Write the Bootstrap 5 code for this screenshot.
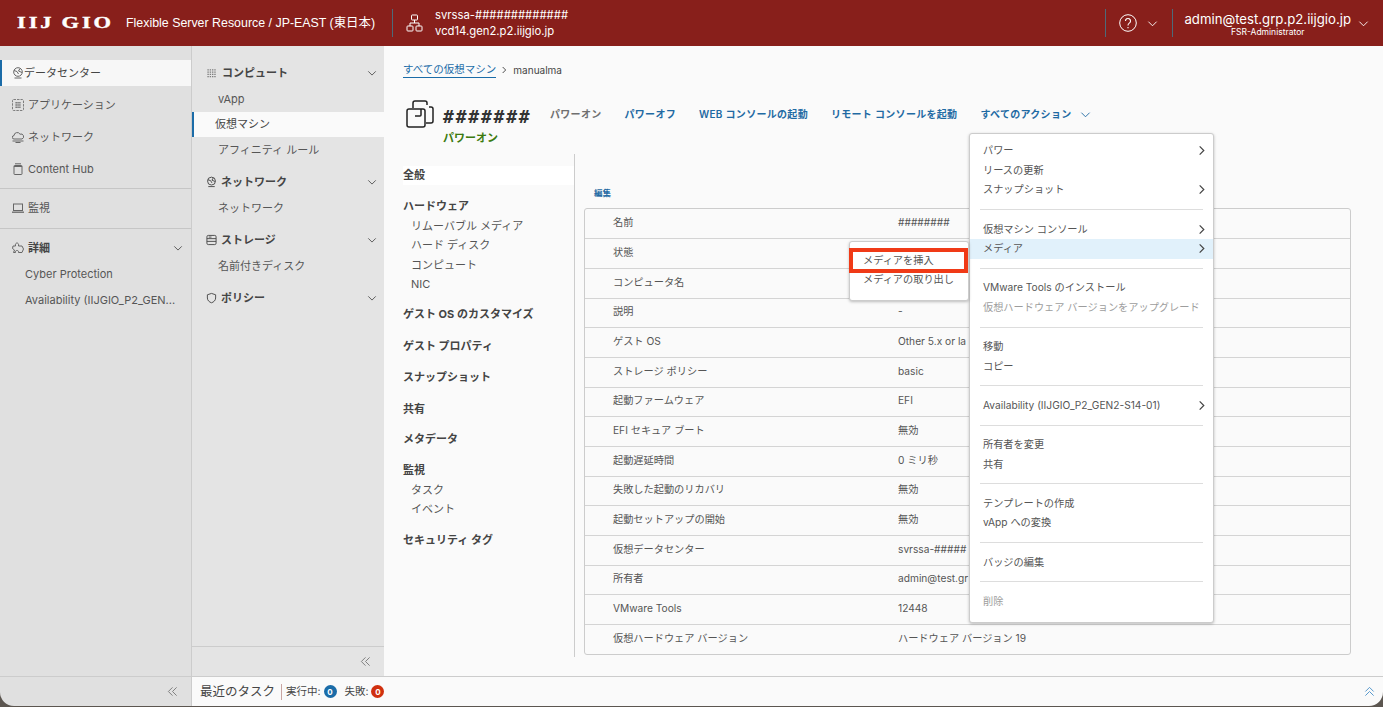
<!DOCTYPE html>
<html lang="ja">
<head>
  <meta charset="UTF-8" />
  <meta name="viewport" content="width=device-width, initial-scale=1.0"/>
  <title>仮想マシン - Flexible Server Resource</title>
  <link href="https://cdn.jsdelivr.net/npm/bootstrap@5.3.3/dist/css/bootstrap.min.css" rel="stylesheet">
  <style>
    html, body { height: 100%; }
    body {
      background: #5c5650;
      color: #454545;
      font-family: Inter, "Noto Sans CJK JP", sans-serif;
      font-size: 11px;
      overflow: hidden;
    }
    svg { flex-shrink: 0; fill: none; stroke: currentColor; stroke-width: 1; }
    a { text-decoration: none; }

    /* header */
    .top-bar { height: 46px; background: #881f1b; color: #fff; }
    .logo-text { width: 126px; padding-left: 17px; white-space: nowrap; }
    .logo-text span {
      display: inline-block; transform: scaleX(1.32); transform-origin: left center;
      font: 700 17px/1 "Liberation Serif", serif;
      letter-spacing: 2.2px; word-spacing: -1px;
      -webkit-text-stroke: .4px #fff;
    }
    .top-title { width: 262px; font: 400 12.4px/1 "Liberation Sans", "Noto Sans CJK JP", sans-serif; white-space: nowrap; }
    .top-sep { width: 1px; height: 28px; background: #4d6a78; }
    .top-vcd { font-size: 11.3px; line-height: 16px; margin-left: 12px; }
    .top-net { margin-left: 13px; }
    .top-help { margin-left: 13px; }
    .top-arrow { margin: 0 14px 0 10px; }
    .top-user { font-size: 13.2px; line-height: 15px; margin-top: 2px; }
    .top-role { font-size: 8.5px; line-height: 10px; }
    .user-block { margin-left: 11px; }
    .user-arrow { margin: 0 14px 0 7px; }

    /* sidebars */
    .app-body { height: 660px; }
    .side-one {
      width: 192px; background: #e0e0e0; border-right: 1px solid #ccc;
      border-bottom-left-radius: 14px; padding-top: 14px;
    }
    .side-two { width: 192px; height: 100%; background: #e4e4e4; padding-top: 14px; }
    .side-row { height: 26px; padding-left: 12px; font-size: 11px; color: #565656; white-space: nowrap; }
    .side-one .side-row { margin-bottom: 6px; }
    .side-one .side-row.flush { margin-bottom: 0; }
    .side-row.on { background: #f7f7f7; border-left: 2px solid #1b6ca8; padding-left: 10px; color: #454545; }
    .side-row.head { font-weight: 700; color: #454545; justify-content: space-between; padding-right: 8px; }
    .side-row.sub { padding-left: 25px; }
    .side-icon { color: #666; margin-right: 4px; }
    .side-icon.near { margin-right: 0; }
    .side-rule { border-top: 1px solid #c6c6c6; margin-bottom: 6px; }
    .side-rule.spaced { margin-top: 1px; }
    .collapse-row { height: 30px; border-top: 1px solid #ccc; color: #777; padding-right: 13px; }
    .two-sub { height: 25.5px; padding-left: 26px; color: #565656; }
    .two-sub.on { background: #fafafa; border-left: 2px solid #1b6ca8; padding-left: 21px; color: #454545; }
    .two-head { height: 26px; padding: 0 7px 0 14px; font-weight: 700; color: #454545; margin-top: 6.500px; }
    .two-head:first-child { margin-top: 0; }

    /* main */
    .main-pane { background: #fafafa; padding: 16px 32px 0 19px; position: relative; }
    .crumb { height: 16px; font-size: 10.5px; }
    .crumb a { color: #1b6ca8; border-bottom: 1px solid #1b6ca8; line-height: 14px; }
    .crumb svg { color: #333; }
    .crumb-name { font-size: 10px; margin-left: 1px; }
    .vm-head { height: 54px; margin-top: 22px; }
    .vm-icon { margin: 0 9px 0 3px; color: #222; }
    .vm-name { font: 700 18px/26px "DejaVu Sans Mono", monospace; color: #333; letter-spacing: 1.800px; width: 107px; margin-top: 4px; white-space: nowrap; }
    .vm-state { color: #3c7a0f; font-weight: 700; font-size: 11px; line-height: 14px; margin-top: 1px; }
    .vm-actions { font-size: 10px; font-weight: 600; color: #1f6aa3; gap: 23px; margin-top: 7px; letter-spacing: .3px; white-space: nowrap; }
    .vm-actions .off { color: #6f6f6f; }
    .detail-wrap { height: 503px; }
    .detail-nav { width: 172px; border-right: 1px solid #ccc; padding-top: 12px; }
    .nav-title { font-weight: 700; height: 19px; margin-bottom: 11px; color: #444; line-height: 19px; }
    .nav-title.pick { background: #fff; margin-bottom: 12px; }
    .nav-title.tight { margin-bottom: 1px; }
    .nav-title.more { margin-bottom: 12px; }
    .nav-title.most { margin-bottom: 13px; }
    .nav-sub { height: 19.4px; line-height: 19px; padding-left: 8px; color: #555; }
    .nav-sub.last { margin-bottom: 10px; }
    .nav-sub.last.wide { margin-bottom: 12px; }
    .detail-panel { padding: 27px 0 0 9px; }
    .edit-link { font-size: 8.5px; font-weight: 700; color: #1f6aa3; height: 27px; padding-left: 10px; line-height: 24px; }
    .detail-box { border: 1px solid #ccc; border-radius: 3px; overflow: hidden; }
    .detail-table { margin: 0; font-size: 10.2px; --bs-table-bg: transparent; --bs-table-color: #555; }
    .detail-table td { height: 29.7px; padding: 0 0 2px; vertical-align: middle; border-color: #d4d4d4; white-space: nowrap; }
    .detail-table tr:last-child td { border-bottom: 0; }
    .detail-table td:first-child { width: 313px; padding-left: 28px; }

    /* menus */
    .action-menu {
      position: absolute; left: 585px; top: 87px; width: 245px;
      background: #fff; border: 1px solid #ccc; border-radius: 3px;
      box-shadow: 0 1px 3px rgba(0,0,0,.25); padding: 7px 0 11px; z-index: 5;
    }
    .menu-line { height: 19.6px; padding: 0 6px 0 13px; color: #555; font-size: 10.2px; white-space: nowrap; }
    .menu-line svg { color: #444; }
    .menu-line.hot { background: #e1f1fb; }
    .menu-line.dim { color: #9d9d9d; }
    .menu-sep { height: 19.6px; display: flex; align-items: center; padding: 0 10px; }
    .menu-sep i { display: block; width: 100%; border-top: 1px solid #ddd; }
    .sub-menu {
      position: absolute; left: 465px; top: 195px; width: 120px; height: 60px;
      background: #fff; border: 1px solid #ccc; border-radius: 3px;
      box-shadow: 0 1px 3px rgba(0,0,0,.25); padding-top: 9px; z-index: 6;
    }
    .sub-menu .menu-line { height: 19px; }
    .mark-box { position: absolute; left: 465px; top: 202px; width: 119px; height: 25px; border: 4.500px solid #f03a17; z-index: 7; }

    /* task bar */
    .task-bar { height: 30px; background: #fafafa; border-top: 1px solid #ccc; padding: 0 8px; color: #454545; border-bottom-right-radius: 14px; }
    .task-title { font-size: 12.5px; padding-right: 6px; border-right: 1px solid #c9a5a2; line-height: 16px; }
    .task-count { font-size: 10.5px; margin-left: 2px; white-space: nowrap; }
    .count-dot {
      width: 13px; height: 13px; border-radius: 50%; color: #fff; font-size: 8px; font-weight: 700;
      display: inline-flex; align-items: center; justify-content: center;
    }
    .count-blue { background: #1b6ca8; }
    .count-red { background: #d0300f; }
    .task-up { color: #4a90c8; }
  </style>
</head>
<body>

  <svg width="0" height="0" class="position-absolute">
    <symbol id="down" viewBox="0 0 12 12"><path d="M1.5 4l4.5 4.5L10.500 4"/></symbol>
    <symbol id="next" viewBox="0 0 12 12"><path d="M4 1.500L8.500 6 4 10.500" stroke-width="1.300"/></symbol>
    <symbol id="double" viewBox="0 0 12 12"><path d="M6 1.500L1.500 6 6 10.500M10.500 1.500L6 6l4.500 4.500"/></symbol>
    <symbol id="dots" viewBox="0 0 12 12"><path d="M1 2h10M1 4.500h10M1 7h10M1 9.500h10" stroke-dasharray="1.500 1" stroke-width="1.300" opacity=".65"/></symbol>
    <symbol id="appbox" viewBox="0 0 12 12"><rect x=".5" y=".5" width="11" height="11" rx="1" stroke-dasharray="2.500 1" opacity=".8"/><path d="M3.500 3.700h5M3.500 6h5M3.500 8.300h5" stroke-dasharray="1.300 .6" stroke-width="1.500"/></symbol>
    <symbol id="cloud" viewBox="0 0 12 12"><path d="M3 8H2a1.700 1.700 0 0 1 0-3.400 3.200 3.200 0 0 1 6-1.400A2.500 2.500 0 0 1 10 8zM.5 10h11M3.500 11.500h5"/></symbol>
    <symbol id="hub" viewBox="0 0 12 12"><rect x="2" y="2.500" width="8" height="9" rx=".6"/><path d="M3 .8h6M2 3.500h8"/></symbol>
    <symbol id="monitor" viewBox="0 0 12 12"><rect x="1.500" y="2" width="9" height="6.500"/><path d="M0 10.200h12" stroke-width="1.300"/></symbol>
    <symbol id="puzzle" viewBox="0 0 12 12"><path d="M1 4h2.500C3 2 4 1 5 1s2 1 1.500 3H10l1.500 3-1.500 3.500H6.500c.3-1.500-.5-2-1.500-2s-1.800.5-1.500 2H1.500L2.500 8 .5 6.500z"/></symbol>
    <symbol id="globe" viewBox="0 0 12 12"><circle cx="6" cy="5" r="4.300"/><path d="M2 3.500l3 1 1.500 2.500M8 1.500L6.500 4 10 5.500M2.500 11h7"/></symbol>
    <symbol id="disk" viewBox="0 0 12 12"><rect x="1" y="1" width="10" height="10" rx="1.500"/><path d="M1 4.500h10M1 7.500h10M3 2.800h3"/></symbol>
    <symbol id="shield" viewBox="0 0 12 12"><path d="M6 1l4.500 1.500V6c0 2.700-2.200 4.500-4.500 5.200C3.700 10.500 1.500 8.700 1.500 6V2.500z"/></symbol>
  </svg>

  <!-- Header -->
  <div class="top-bar d-flex align-items-center">
    <div class="logo-text"><span>IIJ GIO</span></div>
    <div class="top-title">Flexible Server Resource / JP-EAST (東日本)</div>
    <div class="top-sep ms-1"></div>
    <svg class="top-net" width="17" height="18" viewBox="0 0 16 18"><rect x="5" y="1" width="6" height="5" rx=".8"/><rect x=".5" y="12" width="6" height="5" rx=".8"/><rect x="9.500" y="12" width="6" height="5" rx=".8"/><path d="M8 6v3M3.500 12V9h9v3"/></svg>
    <div class="top-vcd">
      <div>svrssa-#############</div>
      <div>vcd14.gen2.p2.iijgio.jp</div>
    </div>
    <div class="top-sep ms-auto"></div>
    <svg class="top-help" width="18" height="18" viewBox="0 0 18 18"><circle cx="9" cy="9" r="8.300"/><path d="M6.500 7a2.500 2.500 0 1 1 3.800 2.100C9.300 9.800 9 10.300 9 11.500M9 13v1.300" stroke-width="1.100"/></svg>
    <svg class="top-arrow" width="11" height="11"><use href="#down"/></svg>
    <div class="top-sep"></div>
    <div class="text-center user-block">
      <div class="top-user">admin@test.grp.p2.iijgio.jp</div>
      <div class="top-role">FSR-Administrator</div>
    </div>
    <svg class="user-arrow" width="11" height="11"><use href="#down"/></svg>
  </div>

  <div class="app-body d-flex">
    <!-- Sidebar 1 -->
    <div class="side-one d-flex flex-column">
      <div class="side-row on d-flex align-items-center"><svg class="side-icon near" width="12" height="12"><use href="#globe"/></svg>データセンター</div>
      <div class="side-row d-flex align-items-center"><svg class="side-icon" width="12" height="12"><use href="#appbox"/></svg>アプリケーション</div>
      <div class="side-row d-flex align-items-center"><svg class="side-icon" width="12" height="12"><use href="#cloud"/></svg>ネットワーク</div>
      <div class="side-row d-flex align-items-center"><svg class="side-icon" width="12" height="12"><use href="#hub"/></svg>Content Hub</div>
      <div class="side-rule"></div>
      <div class="side-row d-flex align-items-center"><svg class="side-icon" width="12" height="12"><use href="#monitor"/></svg>監視</div>
      <div class="side-rule spaced"></div>
      <div class="side-row head flush d-flex align-items-center"><span class="d-flex align-items-center"><svg class="side-icon" width="12" height="12"><use href="#puzzle"/></svg>詳細</span><svg width="10" height="10"><use href="#down"/></svg></div>
      <div class="side-row sub flush d-flex align-items-center">Cyber Protection</div>
      <div class="side-row sub flush d-flex align-items-center">Availability (IIJGIO_P2_GEN...</div>
      <div class="collapse-row d-flex align-items-center justify-content-end mt-auto"><svg width="11" height="11"><use href="#double"/></svg></div>
    </div>

    <div class="flex-grow-1 d-flex flex-column" style="min-width:0">
      <div class="d-flex flex-grow-1" style="min-height:0">
        <!-- Sidebar 2 -->
        <div class="side-two d-flex flex-column">
          <div class="two-head d-flex align-items-center justify-content-between"><span class="d-flex align-items-center gap-1"><svg width="12" height="11"><use href="#dots"/></svg>コンピュート</span><svg width="10" height="10"><use href="#down"/></svg></div>
          <div class="two-sub d-flex align-items-center">vApp</div>
          <div class="two-sub on d-flex align-items-center">仮想マシン</div>
          <div class="two-sub d-flex align-items-center">アフィニティ ルール</div>
          <div class="two-head d-flex align-items-center justify-content-between"><span class="d-flex align-items-center gap-1"><svg width="11" height="12"><use href="#globe"/></svg>ネットワーク</span><svg width="10" height="10"><use href="#down"/></svg></div>
          <div class="two-sub d-flex align-items-center">ネットワーク</div>
          <div class="two-head d-flex align-items-center justify-content-between"><span class="d-flex align-items-center gap-1"><svg width="11" height="12"><use href="#disk"/></svg>ストレージ</span><svg width="10" height="10"><use href="#down"/></svg></div>
          <div class="two-sub d-flex align-items-center">名前付きディスク</div>
          <div class="two-head d-flex align-items-center justify-content-between"><span class="d-flex align-items-center gap-1"><svg width="11" height="12"><use href="#shield"/></svg>ポリシー</span><svg width="10" height="10"><use href="#down"/></svg></div>
          <div class="collapse-row d-flex align-items-center justify-content-end mt-auto"><svg width="11" height="11"><use href="#double"/></svg></div>
        </div>

        <!-- Main -->
        <div class="main-pane flex-grow-1">
          <div class="crumb d-flex align-items-center gap-1"><a href="#">すべての仮想マシン </a><svg width="8" height="8"><use href="#next"/></svg><span class="crumb-name">manualma</span></div>
          <div class="vm-head d-flex">
            <svg class="vm-icon" width="28" height="28" viewBox="0 0 28 28"><path d="M7 8V3a2 2 0 0 1 2-2h10a2 2 0 0 1 2 2v2M23 7h2a2 2 0 0 1 2 2v12a2 2 0 0 1-2 2h-5" stroke-width="1.500"/><rect x="1" y="9" width="18" height="18" rx="2" stroke-width="1.500"/><path d="M15 9v6a1 1 0 0 1-1 1H9" stroke-width="1.500"/></svg>
            <div>
              <div class="vm-name">#######</div>
              <div class="vm-state">パワーオン</div>
            </div>
            <div class="vm-actions d-flex align-items-start">
              <span class="off">パワーオン</span><span>パワーオフ</span><span>WEB コンソールの起動</span><span>リモート コンソールを起動</span>
              <span class="d-flex align-items-center gap-2">すべてのアクション<svg width="11" height="11"><use href="#down"/></svg></span>
            </div>
          </div>
          <div class="detail-wrap d-flex">
            <div class="detail-nav">
              <div class="nav-title pick">全般</div>
              <div class="nav-title tight">ハードウェア</div>
              <div class="nav-sub">リムーバブル メディア</div>
              <div class="nav-sub">ハード ディスク</div>
              <div class="nav-sub">コンピュート</div>
              <div class="nav-sub last">NIC</div>
              <div class="nav-title most">ゲスト OS のカスタマイズ</div>
              <div class="nav-title more">ゲスト プロパティ</div>
              <div class="nav-title most">スナップショット</div>
              <div class="nav-title">共有</div>
              <div class="nav-title more">メタデータ</div>
              <div class="nav-title tight">監視</div>
              <div class="nav-sub">タスク</div>
              <div class="nav-sub last wide">イベント</div>
              <div class="nav-title">セキュリティ タグ</div>
            </div>
            <div class="detail-panel flex-grow-1">
              <div class="edit-link">編集</div>
              <div class="detail-box">
                <table class="table detail-table">
                  <tbody>
                    <tr><td>名前</td><td>########</td></tr>
                    <tr><td>状態</td><td></td></tr>
                    <tr><td>コンピュータ名</td><td></td></tr>
                    <tr><td>説明</td><td>-</td></tr>
                    <tr><td>ゲスト OS</td><td>Other 5.x or la</td></tr>
                    <tr><td>ストレージ ポリシー</td><td>basic</td></tr>
                    <tr><td>起動ファームウェア</td><td>EFI</td></tr>
                    <tr><td>EFI セキュア ブート</td><td>無効</td></tr>
                    <tr><td>起動遅延時間</td><td>0 ミリ秒</td></tr>
                    <tr><td>失敗した起動のリカバリ</td><td>無効</td></tr>
                    <tr><td>起動セットアップの開始</td><td>無効</td></tr>
                    <tr><td>仮想データセンター</td><td>svrssa-#####</td></tr>
                    <tr><td>所有者</td><td>admin@test.gr</td></tr>
                    <tr><td>VMware Tools</td><td>12448</td></tr>
                    <tr><td>仮想ハードウェア バージョン</td><td>ハードウェア バージョン 19</td></tr>
                  </tbody>
                </table>
              </div>
            </div>
          </div>

          <!-- Menus -->
          <div class="sub-menu">
            <div class="menu-line d-flex align-items-center">メディアを挿入</div>
            <div class="menu-line d-flex align-items-center">メディアの取り出し</div>
          </div>
          <div class="mark-box"></div>
          <div class="action-menu">
            <div class="menu-line d-flex align-items-center justify-content-between">パワー<svg width="11" height="11"><use href="#next"/></svg></div>
            <div class="menu-line d-flex align-items-center">リースの更新</div>
            <div class="menu-line d-flex align-items-center justify-content-between">スナップショット<svg width="11" height="11"><use href="#next"/></svg></div>
            <div class="menu-sep"><i></i></div>
            <div class="menu-line d-flex align-items-center justify-content-between">仮想マシン コンソール<svg width="11" height="11"><use href="#next"/></svg></div>
            <div class="menu-line hot d-flex align-items-center justify-content-between">メディア<svg width="11" height="11"><use href="#next"/></svg></div>
            <div class="menu-sep"><i></i></div>
            <div class="menu-line d-flex align-items-center">VMware Tools のインストール</div>
            <div class="menu-line dim d-flex align-items-center">仮想ハードウェア バージョンをアップグレード</div>
            <div class="menu-sep"><i></i></div>
            <div class="menu-line d-flex align-items-center">移動</div>
            <div class="menu-line d-flex align-items-center">コピー</div>
            <div class="menu-sep"><i></i></div>
            <div class="menu-line d-flex align-items-center justify-content-between">Availability (IIJGIO_P2_GEN2-S14-01)<svg width="11" height="11"><use href="#next"/></svg></div>
            <div class="menu-sep"><i></i></div>
            <div class="menu-line d-flex align-items-center">所有者を変更</div>
            <div class="menu-line d-flex align-items-center">共有</div>
            <div class="menu-sep"><i></i></div>
            <div class="menu-line d-flex align-items-center">テンプレートの作成</div>
            <div class="menu-line d-flex align-items-center">vApp への変換</div>
            <div class="menu-sep"><i></i></div>
            <div class="menu-line d-flex align-items-center">バッジの編集</div>
            <div class="menu-sep"><i></i></div>
            <div class="menu-line dim d-flex align-items-center">削除</div>
          </div>
        </div>
      </div>

      <!-- Recent tasks -->
      <div class="task-bar d-flex align-items-center">
        <span class="task-title">最近のタスク</span>
        <span class="task-count ms-1">実行中: <span class="count-dot count-blue">0</span></span>
        <span class="task-count ms-2">失敗: <span class="count-dot count-red">0</span></span>
        <svg class="task-up ms-auto" width="11" height="11" viewBox="0 0 12 12"><path d="M1.500 6L6 1.500 10.500 6M1.500 10.500L6 6l4.500 4.500"/></svg>
      </div>
    </div>
  </div>

  <script src="https://cdn.jsdelivr.net/npm/bootstrap@5.3.3/dist/js/bootstrap.bundle.min.js"></script>
</body>
</html>
